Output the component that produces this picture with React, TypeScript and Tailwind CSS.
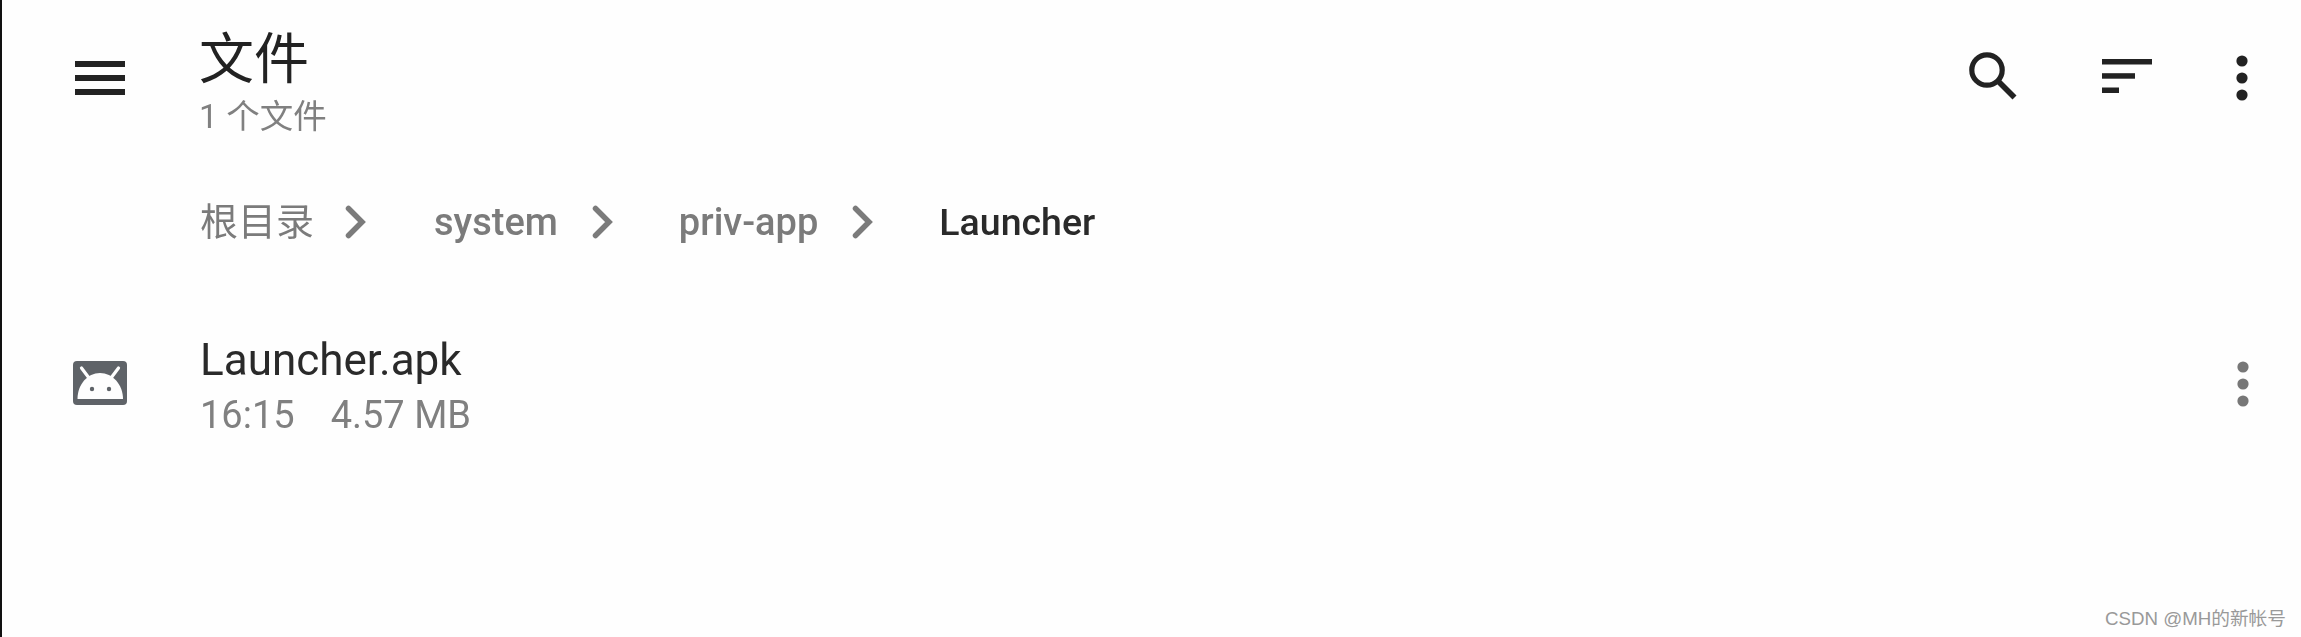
function Chevron({ className }: { className: string }) {
  return (
    <svg className={className} width="22" height="34" viewBox="0 0 22 34" fill="none">
      <path d="M3.5 3.5 L17 17 L3.5 30.5" stroke="#7b7b7b" strokeWidth="5.5" strokeLinecap="round" strokeLinejoin="miter" />
    </svg>
  );
}

function Dots({ color, className }: { color: string; className: string }) {
  return (
    <svg className={className} width="12" height="46" viewBox="0 0 12 46" fill={color}>
      <circle cx="6" cy="6" r="5.6" />
      <circle cx="6" cy="23" r="5.6" />
      <circle cx="6" cy="40" r="5.6" />
    </svg>
  );
}

export default function App() {
  return (
    <div className="relative h-[637px] w-[2301px] overflow-hidden border-l-2 border-[#111111] bg-[#fefefe] font-['Roboto','Noto_Sans_CJK_SC',sans-serif]">
      <div className="blur-[0.5px]">
        <header className="flex items-start">
          <button className="ml-[73px] mt-[61px] w-[124px] shrink-0 text-left">
            <svg width="50" height="34" viewBox="0 0 50 34" fill="#222222">
              <rect x="0" y="0" width="50" height="6" />
              <rect x="0" y="14" width="50" height="6" />
              <rect x="0" y="28" width="50" height="6" />
            </svg>
          </button>
          <div className="mt-[28px] flex-1">
            <div className="text-[55px] leading-[62px] text-[#222222]">文件</div>
            <div className="mt-[7px] text-[33.5px] leading-[40px] text-[#808080]">1 个文件</div>
          </div>
          <div className="mt-[52px] flex items-start">
            <svg className="mr-[85px]" width="48" height="48" viewBox="0 0 48 48" fill="none" stroke="#222222" strokeWidth="5.2">
              <circle cx="18" cy="18" r="15.2" />
              <path d="M29 29 L45.5 45.5" strokeWidth="5.6" />
            </svg>
            <svg className="mt-[7px] mr-[84px]" width="50" height="34" viewBox="0 0 50 34" fill="#222222">
              <rect x="0" y="0" width="50" height="5.5" />
              <rect x="0" y="14.2" width="33" height="5.5" />
              <rect x="0" y="28.5" width="17" height="5.5" />
            </svg>
            <Dots color="#222222" className="mt-[3px] mr-[53px]" />
          </div>
        </header>

        <nav className="mt-[60px] ml-[198px] flex h-[50px] items-center text-[38px] leading-[50px] font-medium text-[#7b7b7b]">
          <span className="font-normal">根目录</span>
          <Chevron className="ml-[31px]" />
          <span className="ml-[67px]">system</span>
          <Chevron className="ml-[34px]" />
          <span className="ml-[65px]">priv-app</span>
          <Chevron className="ml-[34px]" />
          <span className="ml-[65px] text-[37.5px] text-[#2a2a2a]">Launcher</span>
        </nav>

        <section className="mt-[83px] flex items-center">
          <svg className="ml-[71px] -mt-[5px] w-[54px] shrink-0" width="54" height="44" viewBox="0 0 54 44">
            <rect x="0" y="0" width="54" height="44" rx="4" fill="#5f6368" />
            <path d="M4.5 38 C4.5 23.5 14.5 12 27 12 C39.5 12 50 23.5 50 38 Z" fill="#fefefe" />
            <path d="M8.5 7 L16 17 M45.5 7 L38 17" stroke="#fefefe" strokeWidth="3.2" strokeLinecap="round" />
            <circle cx="19" cy="28" r="2.2" fill="#5f6368" />
            <circle cx="36" cy="28" r="2.2" fill="#5f6368" />
          </svg>
          <div className="ml-[73px] flex-1">
            <div className="text-[44px] leading-[60px] text-[#2a2a2a]">Launcher.apk</div>
            <div className="flex text-[38px] leading-[50px] text-[#808080]">
              <span>16:15</span>
              <span className="ml-[36px]">4.57 MB</span>
            </div>
          </div>
          <Dots color="#777777" className="mr-[52px] -mt-[2px]" />
        </section>
      </div>

      <div className="absolute bottom-[6px] right-[15px] font-['Liberation_Sans','Noto_Sans_CJK_SC',sans-serif] text-[18.7px] leading-[24px] text-[#999999]">
        CSDN @MH的新帐号
      </div>
    </div>
  );
}
